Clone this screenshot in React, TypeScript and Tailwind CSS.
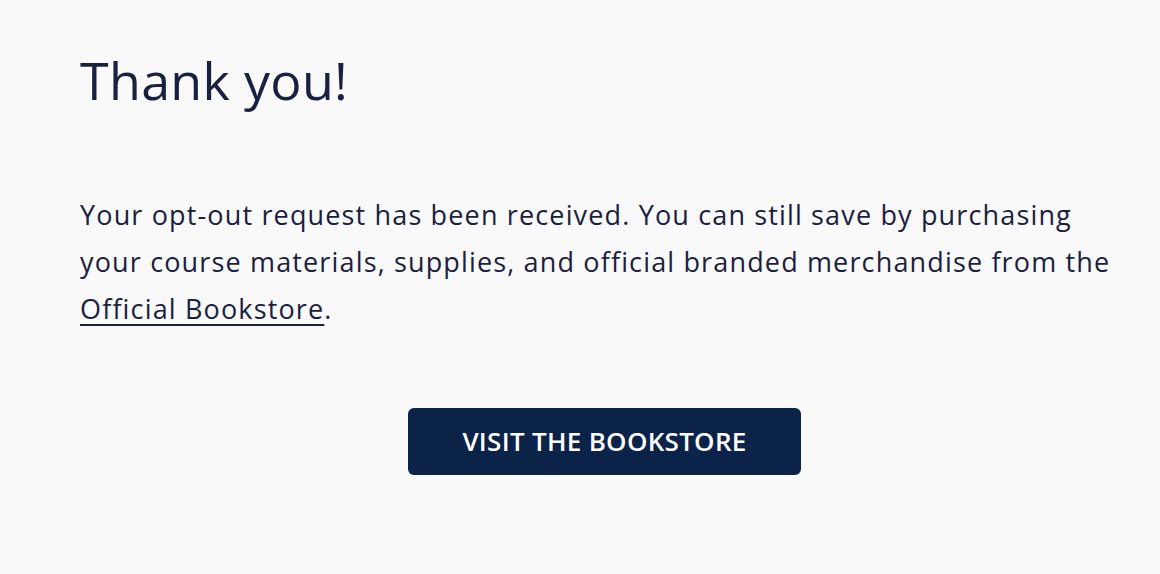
import React from 'react';

export default function App() {
  return (
    <div
      className="min-h-[574px] bg-[#f9f9fa] pl-[80px] pr-[31px] pt-[50px] text-[#1a2140]"
      style={{ fontFamily: '"Open Sans", "Liberation Sans", sans-serif' }}
    >
      <h1 className="text-[52px] leading-[60px] font-normal tracking-[0.3px]">Thank you!</h1>
      <p className="mt-[81px] whitespace-nowrap text-[27px] leading-[47px] tracking-[1.15px]">
        Your opt-out request has been received. You can still save by purchasing
        <br />
        your course materials, supplies, and official branded merchandise from the
        <br />
        <a href="#" className="underline underline-offset-[5px] decoration-[1.5px]">
          Official Bookstore
        </a>
        .
      </p>
      <div className="mt-[76px] flex justify-center">
        <button className="h-[67px] w-[393px] rounded-[6px] bg-[#0b2249] text-[26px] font-semibold tracking-[0.3px] text-white">
          VISIT THE BOOKSTORE
        </button>
      </div>
    </div>
  );
}
